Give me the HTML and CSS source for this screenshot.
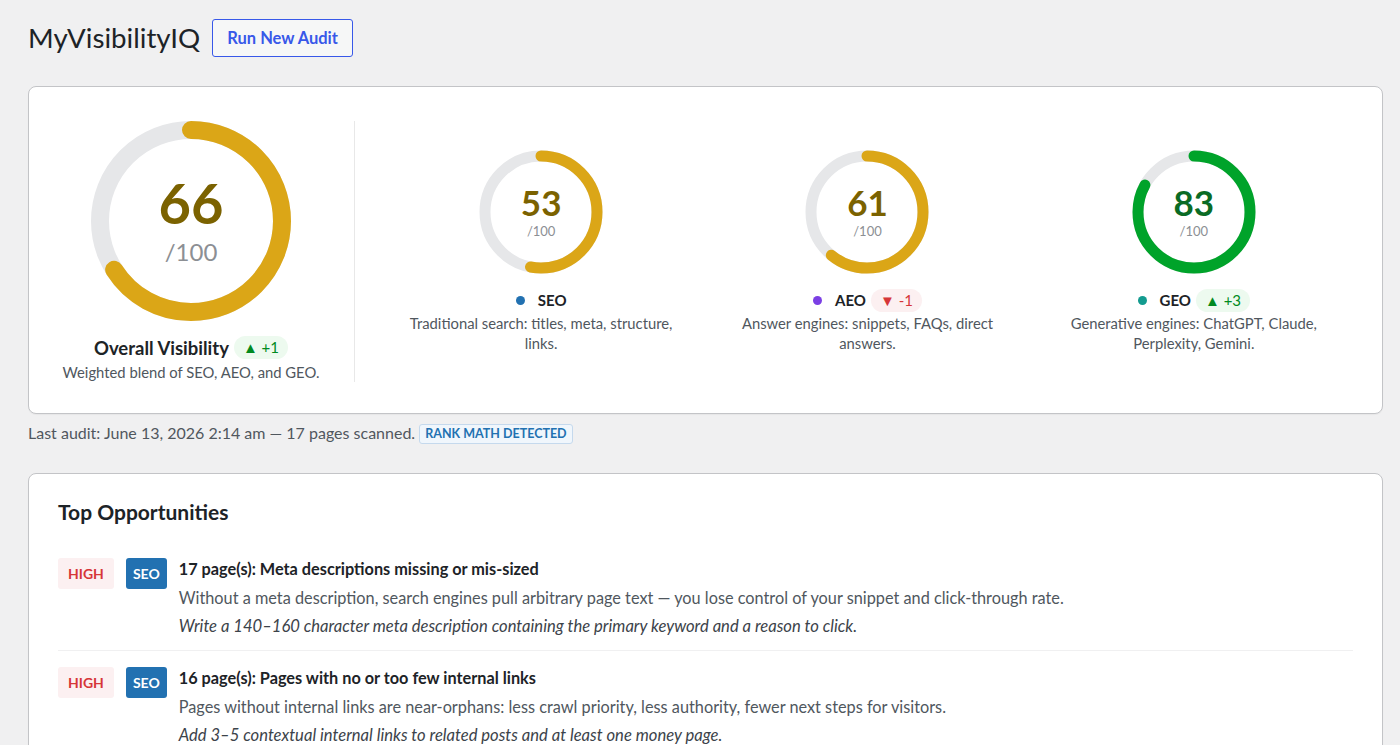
FILE: index.html
```html
<!DOCTYPE html>
<html lang="en">
<head>
    <meta charset="UTF-8">
    <meta name="viewport" content="width=device-width, initial-scale=1.0">
    <title>MyVisibilityIQ</title>
    <link rel="stylesheet" href="styles.css">
</head>
<body>

<div class="wrap">
    <div class="page-head">
        <h1>MyVisibilityIQ</h1>
        <button type="button" class="btn-audit">Run New Audit</button>
    </div>

    <div class="card scores">
        <div class="overall">
            <div class="gauge gauge-big">
                <svg viewBox="0 0 200 200" width="200" height="200">
                    <circle class="track" cx="100" cy="100" r="91" stroke-width="18"></circle>
                    <circle class="arc arc-warn" cx="100" cy="100" r="91" stroke-width="18" pathLength="100" stroke-dasharray="66 100"></circle>
                </svg>
                <div class="gauge-text">
                    <span class="num num-warn">66</span>
                    <span class="of">/100</span>
                </div>
            </div>
            <div class="overall-title">Overall Visibility <span class="delta up">&#9650; +1</span></div>
            <p class="desc">Weighted blend of SEO, AEO, and GEO.</p>
        </div>

        <div class="pillars">
            <div class="pillar">
                <div class="gauge gauge-small">
                    <svg viewBox="0 0 124 124" width="124" height="124">
                        <circle class="track" cx="62" cy="62" r="56" stroke-width="11"></circle>
                        <circle class="arc arc-warn" cx="62" cy="62" r="56" stroke-width="11" pathLength="100" stroke-dasharray="53 100"></circle>
                    </svg>
                    <div class="gauge-text">
                        <span class="num num-warn">53</span>
                        <span class="of">/100</span>
                    </div>
                </div>
                <div class="pillar-label"><span class="dot dot-seo"></span>SEO</div>
                <p class="desc">Traditional search: titles, meta, structure, links.</p>
            </div>

            <div class="pillar">
                <div class="gauge gauge-small">
                    <svg viewBox="0 0 124 124" width="124" height="124">
                        <circle class="track" cx="62" cy="62" r="56" stroke-width="11"></circle>
                        <circle class="arc arc-warn" cx="62" cy="62" r="56" stroke-width="11" pathLength="100" stroke-dasharray="61 100"></circle>
                    </svg>
                    <div class="gauge-text">
                        <span class="num num-warn">61</span>
                        <span class="of">/100</span>
                    </div>
                </div>
                <div class="pillar-label"><span class="dot dot-aeo"></span>AEO <span class="delta down">&#9660; -1</span></div>
                <p class="desc">Answer engines: snippets, FAQs, direct answers.</p>
            </div>

            <div class="pillar">
                <div class="gauge gauge-small">
                    <svg viewBox="0 0 124 124" width="124" height="124">
                        <circle class="track" cx="62" cy="62" r="56" stroke-width="11"></circle>
                        <circle class="arc arc-good" cx="62" cy="62" r="56" stroke-width="11" pathLength="100" stroke-dasharray="83 100"></circle>
                    </svg>
                    <div class="gauge-text">
                        <span class="num num-good">83</span>
                        <span class="of">/100</span>
                    </div>
                </div>
                <div class="pillar-label"><span class="dot dot-geo"></span>GEO <span class="delta up">&#9650; +3</span></div>
                <p class="desc">Generative engines: ChatGPT, Claude, Perplexity, Gemini.</p>
            </div>
        </div>
    </div>

    <p class="last-audit">Last audit: June 13, 2026 2:14 am &mdash; 17 pages scanned. <span class="detected">Rank Math detected</span></p>

    <div class="card opportunities">
        <h2>Top Opportunities</h2>

        <div class="opp">
            <span class="tag tag-high">HIGH</span>
            <span class="tag tag-seo">SEO</span>
            <div class="opp-body">
                <div class="opp-title">17 page(s): Meta descriptions missing or mis-sized</div>
                <div class="opp-why">Without a meta description, search engines pull arbitrary page text &mdash; you lose control of your snippet and click-through rate.</div>
                <div class="opp-fix">Write a 140&ndash;160 character meta description containing the primary keyword and a reason to click.</div>
            </div>
        </div>

        <div class="opp">
            <span class="tag tag-high">HIGH</span>
            <span class="tag tag-seo">SEO</span>
            <div class="opp-body">
                <div class="opp-title">16 page(s): Pages with no or too few internal links</div>
                <div class="opp-why">Pages without internal links are near-orphans: less crawl priority, less authority, fewer next steps for visitors.</div>
                <div class="opp-fix">Add 3&ndash;5 contextual internal links to related posts and at least one money page.</div>
            </div>
        </div>
    </div>
</div>

</body>
</html>
```

FILE: styles.css
```css
body {
    margin: 0;
    padding: 0;
    background-color: #f0f0f1;
    font-family: Lato, "Noto Sans", sans-serif;
    font-size: 15px;
    color: #3c434a;
}

.wrap {
    padding: 19px 17px 0 28px;
}

.page-head {
    display: flex;
    align-items: center;
    gap: 12px;
}

.page-head h1 {
    margin: 0;
    font-size: 27.7px;
    font-weight: 400;
    color: #1d2327;
    line-height: 38px;
}

.btn-audit {
    height: 38px;
    padding: 0 14px;
    background-color: #f6f7f7;
    border: 1px solid #3858e9;
    border-radius: 3px;
    color: #3858e9;
    font-family: inherit;
    font-size: 16.5px;
    font-weight: 700;
    cursor: pointer;
}

.card {
    background-color: white;
    border: 1px solid #c3c4c7;
    border-radius: 8px;
    box-shadow: 0 1px 1px rgba(0, 0, 0, 0.04);
}

.scores {
    margin-top: 29px;
    padding: 34px 25px 31px 27px;
    display: flex;
}

.overall {
    width: 270px;
    padding-right: 28px;
    border-right: 1px solid #e8e8e8;
    display: flex;
    flex-direction: column;
    align-items: center;
    justify-content: center;
}

.pillars {
    flex: 1;
    padding-left: 23px;
    display: grid;
    grid-template-columns: repeat(3, 1fr);
    align-items: center;
}

.pillar {
    display: flex;
    flex-direction: column;
    align-items: center;
}

.gauge {
    position: relative;
}

.gauge svg {
    display: block;
    transform: rotate(-90deg);
}

.gauge circle {
    fill: none;
}

.track {
    stroke: #e6e7e9;
}

.arc {
    stroke-linecap: round;
}

.arc-warn {
    stroke: #dba617;
}

.arc-good {
    stroke: #00a32a;
}

.gauge-text {
    position: absolute;
    top: 0;
    left: 0;
    right: 0;
    bottom: 0;
    display: flex;
    flex-direction: column;
    align-items: center;
    justify-content: center;
}

.num {
    font-weight: 700;
    line-height: 1;
}

.num-warn {
    color: #7b6200;
}

.num-good {
    color: #0a6b25;
}

.gauge-big .num {
    font-size: 56px;
    margin-top: -2px;
}

.gauge-big .of {
    font-size: 24px;
    color: #8c8f94;
    margin-top: 6px;
}

.gauge-small .num {
    font-size: 35px;
    margin-top: 0;
}

.gauge-small .of {
    font-size: 13px;
    color: #8c8f94;
    margin-top: 3px;
}

.overall-title {
    margin-top: 15px;
    font-size: 18.5px;
    font-weight: 700;
    color: #1d2327;
    display: flex;
    align-items: center;
    gap: 5px;
}

.desc {
    margin: 2px 0 0;
    max-width: 275px;
    text-align: center;
    color: #50575e;
    font-size: 14.8px;
    line-height: 20px;
}

.overall .desc {
    margin-top: 3px;
}

.pillar-label {
    margin-top: 14px;
    display: flex;
    align-items: center;
    font-size: 15px;
    font-weight: 700;
    color: #1d2327;
    gap: 5px;
    height: 24px;
}

.pillar .desc {
    margin-top: 1px;
}

.dot {
    width: 9px;
    height: 9px;
    border-radius: 50%;
    margin-right: 8px;
}

.dot-seo {
    background-color: #2271b1;
}

.dot-aeo {
    background-color: #7b3fe4;
}

.dot-geo {
    background-color: #139b8f;
}

.delta {
    font-size: 15px;
    font-weight: 400;
    padding: 2px 9px;
    border-radius: 12px;
    line-height: 19px;
}

.delta.up {
    background-color: #edfaef;
    color: #008a20;
}

.delta.down {
    background-color: #fcf0f1;
    color: #d63638;
}

.last-audit {
    margin: 9px 0 0;
    color: #50575e;
    font-size: 16px;
    line-height: 20px;
}

.detected {
    display: inline-block;
    padding: 0 5px;
    background-color: #f0f6fc;
    border: 1px solid #c5d9ed;
    border-radius: 3px;
    color: #2271b1;
    font-size: 12.5px;
    font-weight: 700;
    text-transform: uppercase;
    line-height: 18px;
    vertical-align: 1px;
}

.opportunities {
    margin-top: 29px;
    padding: 24px 29px 0;
}

.opportunities h2 {
    margin: 0 0 32px;
    font-size: 21px;
    font-weight: 700;
    color: #1d2327;
    line-height: 28px;
}

.opp {
    display: flex;
    align-items: flex-start;
    padding: 0 0 13px;
    border-bottom: 1px solid #f0f0f1;
}

.opp + .opp {
    padding-top: 16px;
}

.tag {
    height: 31px;
    line-height: 31px;
    border-radius: 3px;
    font-size: 14px;
    font-weight: 700;
    flex-shrink: 0;
}

.tag-high {
    padding: 0 10px;
    background-color: #fcf0f1;
    color: #d63638;
    margin-right: 12px;
}

.tag-seo {
    padding: 0 7px;
    background-color: #2271b1;
    color: white;
    margin-right: 12px;
}

.opp-body {
    font-size: 16.3px;
    line-height: 22px;
}

.opp-title {
    font-weight: 700;
    color: #1d2327;
}

.opp-why {
    margin-top: 7px;
    color: #50575e;
}

.opp-fix {
    margin-top: 6px;
    font-size: 16.6px;
    font-style: italic;
    color: #3c434a;
}
```
